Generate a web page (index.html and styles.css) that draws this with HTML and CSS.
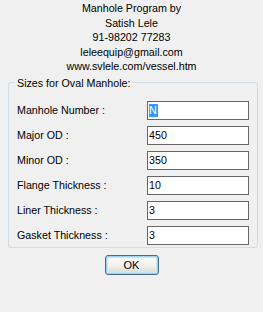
FILE: index.html
```html
<!DOCTYPE html>
<html>
<head>
	<title>Manhole Program</title>
	<link rel="stylesheet" href="styles.css">
</head>
<body>
	<div class="dialog">
		<div class="about">
			<div>Manhole Program by</div>
			<div>Satish Lele</div>
			<div>91-98202 77283</div>
			<div>leleequip@gmail.com</div>
			<div>www.svlele.com/vessel.htm</div>
		</div>
		<fieldset class="group">
			<legend>Sizes for Oval Manhole:</legend>
			<div class="rows">
				<label>Manhole Number :</label>
				<div class="field"><span class="sel">N</span></div>
				<label>Major OD :</label>
				<div class="field">450</div>
				<label>Minor OD :</label>
				<div class="field">350</div>
				<label>Flange Thickness :</label>
				<div class="field">10</div>
				<label>Liner Thickness :</label>
				<div class="field">3</div>
				<label>Gasket Thickness :</label>
				<div class="field">3</div>
			</div>
		</fieldset>
		<div class="buttons">
			<button type="button" class="ok">OK</button>
		</div>
	</div>
</body>
</html>
```

FILE: styles.css
```css
body {
  margin: 0;
  background-color: #f0f0f0;
  font-family: "Liberation Sans", Arial, sans-serif;
  font-size: 10.7px;
  color: #000;
}

.dialog {
  width: 263px;
  height: 312px;
}

.about {
  padding-top: 1px;
  text-align: center;
  line-height: 14.5px;
}

.group {
  margin: 2px 0 0 8px;
  width: 233px;
  padding: 11px 7px 2px 8px;
  border: 1px solid #d3dbe3;
  border-radius: 3px;
}

.group legend {
  margin-left: -2px;
  padding: 0 2px;
  line-height: 14px;
}

.rows {
  display: grid;
  grid-template-columns: 130px 102px;
  row-gap: 6px;
  align-items: center;
}

.field {
  height: 17px;
  border: 1px solid #666;
  background-color: #fff;
  padding-left: 1px;
  line-height: 17px;
}

.sel {
  display: inline-block;
  background-color: #3399ff;
  color: #fff;
  line-height: 13px;
  padding: 0 1px 0 0;
}

.buttons {
  display: flex;
  justify-content: center;
  margin-top: 7px;
}

.ok {
  width: 54px;
  height: 20px;
  padding: 0;
  font-family: "Liberation Sans", Arial, sans-serif;
  font-size: 11px;
  color: #000;
  border: 1px solid #4a6a8a;
  border-radius: 3px;
  background: linear-gradient(#fdfdfb, #f1f1ec 55%, #d8d8d2);
  box-shadow: inset 0 0 0 1px #9fd3f2, inset 0 0 0 2px #c6e6f8;
}
```
